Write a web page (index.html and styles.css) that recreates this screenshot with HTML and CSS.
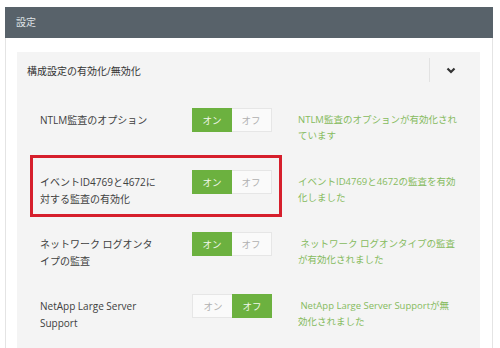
FILE: index.html
```html
<!DOCTYPE html>
<html>
  <head>
    <meta charset="UTF-8">
    <title>設定</title>
    <link rel="stylesheet" href="styles.css">
  </head>
  <body>

    <div class="card">
      <div class="card-title">設定</div>

      <div class="card-body">
        <div class="panel">

          <div class="panel-head">
            <span class="panel-title">構成設定の有効化/無効化</span>
            <span class="panel-toggle">
              <svg width="10" height="7" viewBox="0 0 10 7">
                <polyline points="1.5,1.5 5,5 8.5,1.5" fill="none" stroke="#333" stroke-width="2.2"/>
              </svg>
            </span>
          </div>

          <div class="row">
            <div class="label">NTLM監査のオプション</div>
            <div class="switch">
              <span class="seg active">オン</span>
              <span class="seg">オフ</span>
            </div>
            <div class="status">NTLM監査のオプションが有効化されています</div>
          </div>

          <div class="row">
            <div class="label">イベントID4769と4672に対する監査の有効化</div>
            <div class="switch">
              <span class="seg active">オン</span>
              <span class="seg">オフ</span>
            </div>
            <div class="status">イベントID4769と4672の監査を有効化しました</div>
            <div class="highlight"></div>
          </div>

          <div class="row">
            <div class="label">ネットワーク ログオンタイプの監査</div>
            <div class="switch">
              <span class="seg active">オン</span>
              <span class="seg">オフ</span>
            </div>
            <div class="status">&nbsp;ネットワーク ログオンタイプの監査が有効化されました</div>
          </div>

          <div class="row">
            <div class="label">NetApp Large Server Support</div>
            <div class="switch">
              <span class="seg">オン</span>
              <span class="seg active">オフ</span>
            </div>
            <div class="status">&nbsp;NetApp Large Server Supportが無効化されました</div>
          </div>

        </div>
      </div>
    </div>

  </body>
</html>
```

FILE: styles.css
```css
body {
  margin: 0;
  padding: 7px 7px 0 5px;
  background: #ffffff;
  font-family: "Open Sans", "Noto Sans CJK JP", sans-serif;
  color: #444;
}

.card {
  width: 488px;
  height: 341px;
  box-sizing: border-box;
  border: 1px solid #e4e4e4;
  border-bottom: none;
}

.card-title {
  height: 31px;
  margin: -1px -1px 0;
  padding-left: 11px;
  background: #58626a;
  color: #dfe3e6;
  font-size: 10px;
  line-height: 31px;
}

.card-body {
  padding: 14px 12px 0 11px;
}

.panel {
  background: #f4f4f4;
  height: 300px;
}

.panel-head {
  display: flex;
  align-items: center;
  height: 36px;
  padding-left: 10px;
  font-size: 10px;
  color: #333;
}

.panel-title {
  flex: 1;
}

.panel-toggle {
  width: 42px;
  height: 24px;
  padding-right: 8px;
  border-left: 1px solid #e2e2e2;
  display: flex;
  align-items: center;
  justify-content: center;
}

.row {
  position: relative;
  display: grid;
  grid-template-columns: 152px 106px 160px;
  align-items: start;
  height: 62px;
  padding: 20px 0 0 23px;
  box-sizing: border-box;
}

.label {
  width: 119px;
  font-size: 10px;
  line-height: 17px;
  color: #404040;
  margin-top: 4px;
}

.switch {
  display: flex;
  width: 80px;
  height: 24px;
  box-sizing: border-box;
  border: 1px solid #e6e6e6;
  background: #fafafa;
}

.seg {
  flex: 1;
  display: flex;
  align-items: center;
  justify-content: center;
  font-size: 9.5px;
  color: #b0b0b0;
}

.seg.active {
  margin: -1px;
  background: #6cb13f;
  color: #f2f8ec;
}

.status {
  font-size: 9.5px;
  line-height: 16px;
  color: #86bb5e;
  margin-top: 4px;
}

.highlight {
  position: absolute;
  left: 13px;
  top: 5px;
  width: 252px;
  height: 62px;
  box-sizing: border-box;
  border: 3px solid #d61f2c;
}
```
